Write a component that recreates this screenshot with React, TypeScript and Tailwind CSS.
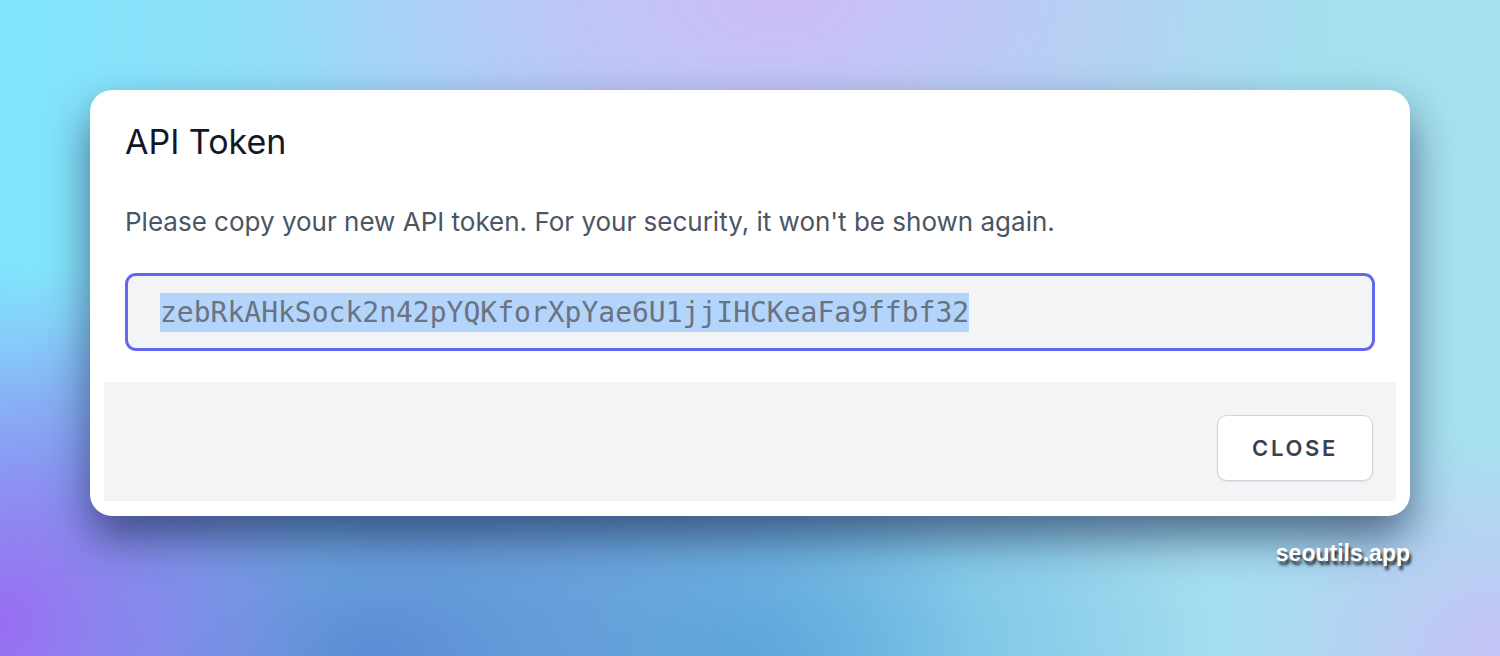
export default function App() {
  const token = 'zebRkAHkSock2n42pYQKforXpYae6U1jjIHCKeaFa9ffbf32';

  return (
    <div className="relative h-[656px] w-full overflow-hidden bg-[radial-gradient(ellipse_22%_55%_at_0%_95%,#9a6cf2_0%,rgba(154,108,242,0)_100%),radial-gradient(ellipse_40%_60%_at_25%_100%,#5a8cd4_0%,rgba(90,140,212,0)_100%),radial-gradient(ellipse_32%_45%_at_50%_100%,#5eb6df_0%,rgba(94,182,223,0)_100%),radial-gradient(ellipse_18%_35%_at_100%_100%,#c6c2f6_0%,rgba(198,194,246,0)_100%),radial-gradient(ellipse_35%_45%_at_52%_0%,#cdbdf8_0%,rgba(205,189,248,0)_100%),linear-gradient(to_right,#7fe6fc_0%,#a8d4f4_40%,#a6dcf0_70%,#a5e2ee_100%)] px-[90px] pt-[90px] font-['Inter',sans-serif]">
      <div className="rounded-[22px] bg-white p-[14px] pb-[15px] shadow-[0_22px_44px_rgba(20,30,70,0.6)]">
        <div className="px-[21px]">
          <h2 className="pt-[17px] text-[34px] leading-[42px] font-normal text-[#111827]">
            API Token
          </h2>
          <p className="mt-[42px] text-[26px] leading-[34px] text-[#4b5563]">
            Please copy your new API token. For your security, it won't be shown again.
          </p>
          <div className="mt-[34px] flex h-[78px] items-center rounded-[11px] border-[3px] border-[#6366f1] bg-[#f3f4f6] px-[32px]">
            <span className="bg-[#b3d4fb] font-['DejaVu_Sans_Mono',monospace] text-[28px] leading-[39px] text-[#6b7280]">
              {token}
            </span>
          </div>
        </div>
        <div className="mt-[31px] flex justify-end bg-[#f3f4f6] pt-[33px] pr-[23px] pb-[20px]">
          <button className="h-[66px] w-[156px] rounded-[10px] border border-[#d1d5db] bg-white text-[22px] font-semibold tracking-[0.12em] text-[#374151] shadow-[0_1px_2px_rgba(0,0,0,0.08)]">
            CLOSE
          </button>
        </div>
      </div>
      <div className="mt-[20px] flex justify-end">
        <span className="font-['Liberation_Sans',sans-serif] text-[23px] font-bold text-white [text-shadow:2px_4px_3px_rgba(0,0,0,0.8)]">
          seoutils.app
        </span>
      </div>
    </div>
  );
}
